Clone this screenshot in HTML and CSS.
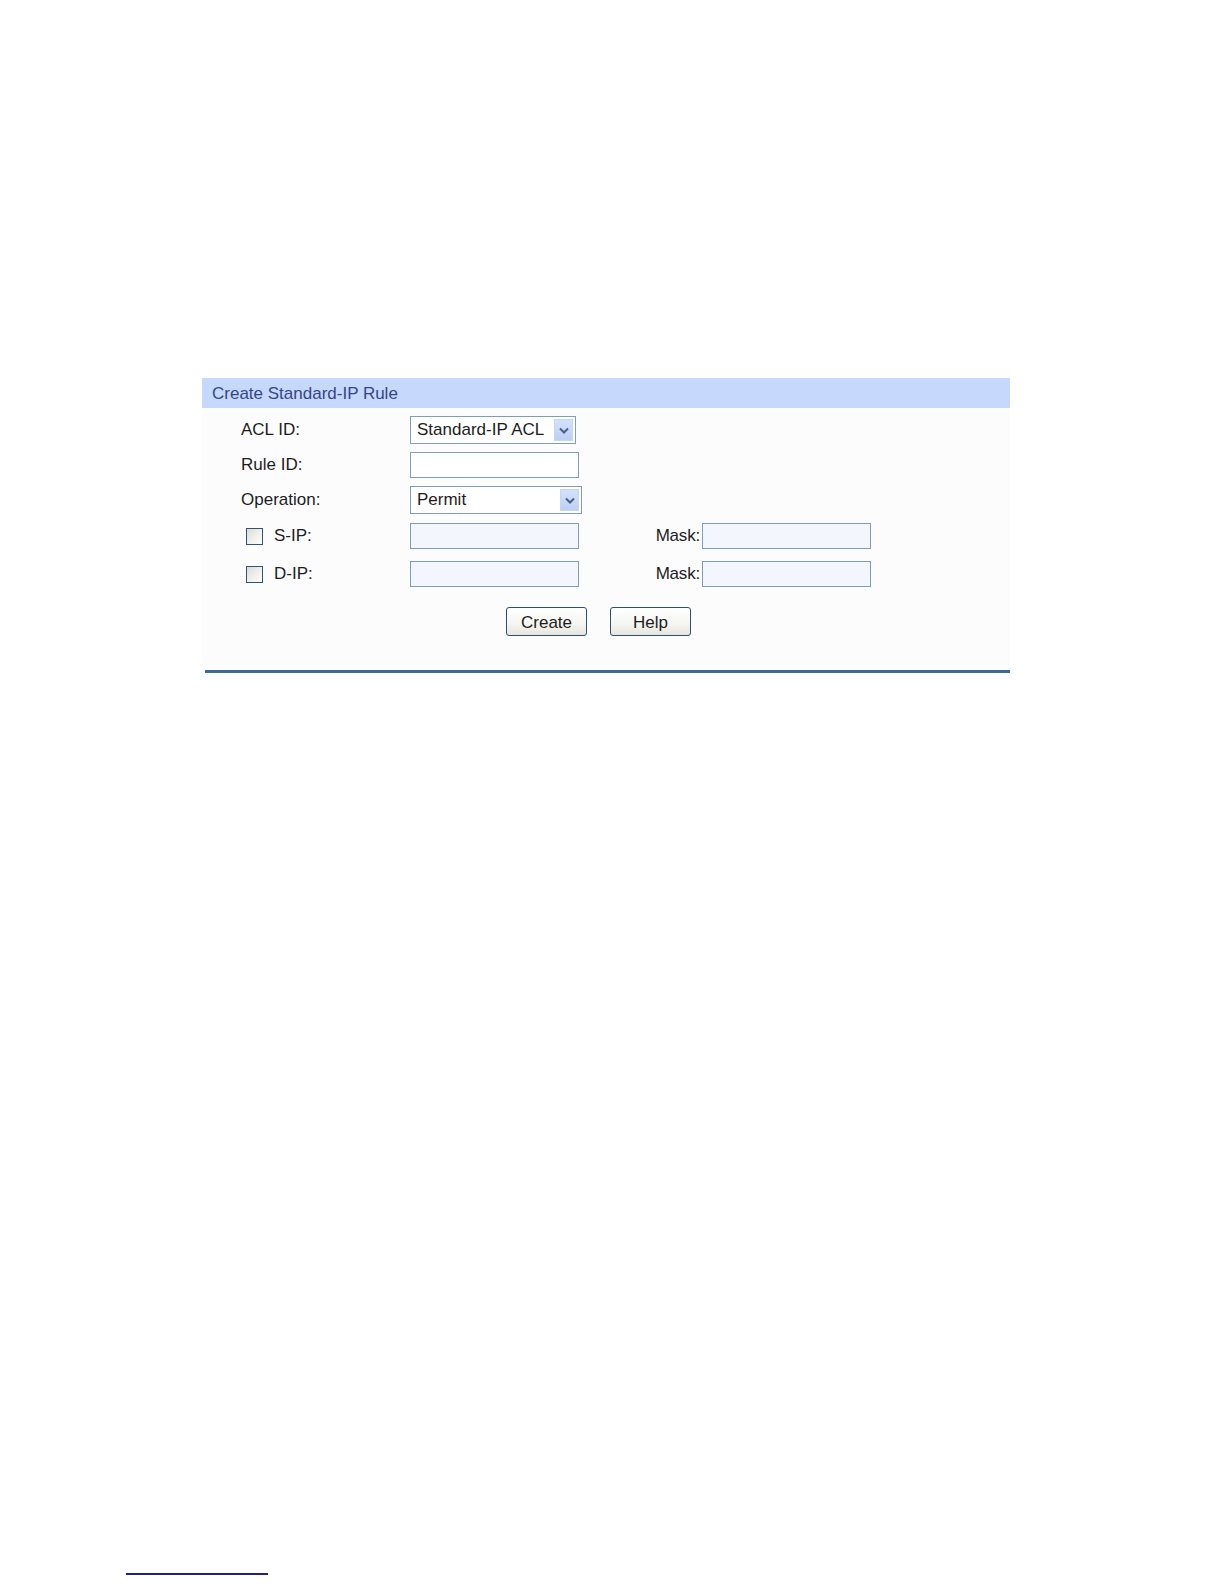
FILE: index.html
```html
<!DOCTYPE html>
<html>
<head>
<meta charset="utf-8">
<link rel="stylesheet" href="styles.css">
</head>
<body>
<div class="page">
  <div class="panel">
    <div class="panel-title">Create Standard-IP Rule</div>
    <div class="panel-body">
      <div class="row row-acl">
        <div class="label">ACL ID:</div>
        <div class="select sel-acl"><span class="sel-text">Standard-IP ACL</span><span class="sel-btn"><svg width="10" height="7" viewBox="0 0 10 7"><path d="M1 1.5 L5 5.5 L9 1.5" fill="none" stroke="#4a5f86" stroke-width="2"/></svg></span></div>
      </div>
      <div class="row row-rule">
        <div class="label">Rule ID:</div>
        <div class="input input-white"></div>
      </div>
      <div class="row row-op">
        <div class="label">Operation:</div>
        <div class="select sel-op"><span class="sel-text">Permit</span><span class="sel-btn"><svg width="10" height="7" viewBox="0 0 10 7"><path d="M1 1.5 L5 5.5 L9 1.5" fill="none" stroke="#4a5f86" stroke-width="2"/></svg></span></div>
      </div>
      <div class="row row-sip">
        <div class="label label-check"><span class="checkbox"></span><span>S-IP:</span></div>
        <div class="input input-tint"></div>
        <div class="mask-label">Mask:</div>
        <div class="input input-tint"></div>
      </div>
      <div class="row row-dip">
        <div class="label label-check"><span class="checkbox"></span><span>D-IP:</span></div>
        <div class="input input-tint"></div>
        <div class="mask-label">Mask:</div>
        <div class="input input-tint"></div>
      </div>
      <div class="buttons">
        <button class="btn">Create</button>
        <button class="btn">Help</button>
      </div>
    </div>
  </div>
  <div class="panel-rule"></div>
  <div class="footnote-rule"></div>
</div>
</body>
</html>
```
FILE: styles.css
```css
html, body {
  margin: 0;
  padding: 0;
  background: #ffffff;
}
.page {
  font-family: "Liberation Sans", Arial, sans-serif;
  font-size: 17px;
  color: #1d1d1d;
  padding-top: 378px;
}
.panel {
  margin-left: 202px;
  width: 808px;
}
.panel-title {
  height: 30px;
  background: #c6d8fb;
  color: #34468a;
  line-height: 32px;
  padding-left: 10px;
  font-size: 17px;
}
.panel-body {
  background: #fcfcfd;
  padding-top: 8px;
  height: 262px;
  box-sizing: border-box;
}
.row {
  display: flex;
  align-items: center;
}
.label {
  width: 169px;
  padding-left: 39px;
  flex: none;
}
.label-check {
  display: flex;
  align-items: center;
  padding-left: 44px;
  width: 164px;
}
.checkbox {
  width: 15px;
  height: 15px;
  border: 1px solid #2f5275;
  background: linear-gradient(135deg, #dcdcd6 0%, #f2f2ee 60%, #fbfbf9 100%);
  margin-right: 11px;
  flex: none;
}
.select {
  height: 26px;
  border: 1px solid #7f9db9;
  background: #fff;
  display: flex;
  align-items: center;
  justify-content: space-between;
  padding: 0 2px 0 6px;
  flex: none;
}
.sel-acl { width: 156px; }
.sel-op { width: 162px; }
.sel-text {
  white-space: nowrap;
}
.sel-btn {
  width: 19px;
  height: 22px;
  background: linear-gradient(180deg, #d3e1fb 0%, #bccff5 100%);
  border: 1px solid #c7d5f1;
  display: flex;
  align-items: center;
  justify-content: center;
  box-sizing: border-box;
}
.input {
  width: 167px;
  height: 24px;
  border: 1px solid #7f9db9;
  flex: none;
}
.input-white { background: #ffffff; }
.input-tint { background: #f3f6fd; }
.mask-label {
  width: 123px;
  text-align: right;
  padding-right: 2px;
  box-sizing: border-box;
  letter-spacing: -0.2px;
  flex: none;
}
.row-rule { margin-top: 8px; }
.row-op { margin-top: 8px; }
.row-sip { margin-top: 9px; }
.row-dip { margin-top: 12px; }
.buttons {
  display: flex;
  margin-top: 20px;
  padding-left: 304px;
  gap: 23px;
}
.btn {
  width: 81px;
  height: 29px;
  border: 1px solid #2f4f70;
  border-radius: 3px;
  background: linear-gradient(180deg, #ffffff 0%, #f5f5f1 60%, #e6e5dc 100%);
  font-family: "Liberation Sans", Arial, sans-serif;
  font-size: 17px;
  color: #1d1d1d;
  padding: 0;
  padding-top: 2px;
}
.panel-rule {
  margin-left: 205px;
  width: 805px;
  height: 3px;
  background: #3c6b98;
}
.footnote-rule {
  position: absolute;
  left: 126px;
  top: 1573px;
  width: 142px;
  height: 2px;
  background: #1f1f8c;
}
```
